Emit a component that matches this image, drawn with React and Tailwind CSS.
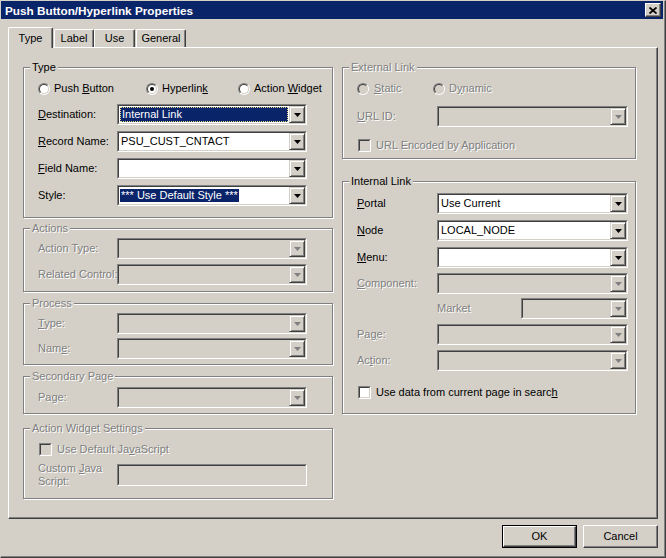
import React from "react";

const DIS = "text-[#808080] [text-shadow:1px_1px_0_#fff]";

const Radio = ({ checked, disabled }) => (
  <span className="flex w-[12px] h-[12px] shrink-0 rounded-full border border-t-[#808080] border-l-[#808080] border-r-white border-b-white">
    <span
      className={`flex flex-1 items-center justify-center rounded-full border border-t-[#404040] border-l-[#404040] border-r-[#d4d0c8] border-b-[#d4d0c8] ${
        disabled ? "bg-[#d4d0c8]" : "bg-white"
      }`}
    >
      {checked && <span className="w-[4px] h-[4px] rounded-full bg-black" />}
    </span>
  </span>
);

const Check = ({ disabled }) => (
  <span className="flex w-[13px] h-[13px] shrink-0 border border-t-[#808080] border-l-[#808080] border-r-white border-b-white">
    <span
      className={`flex-1 border border-t-[#404040] border-l-[#404040] border-r-[#d4d0c8] border-b-[#d4d0c8] ${
        disabled ? "bg-[#d4d0c8]" : "bg-white"
      }`}
    />
  </span>
);

const Arrow = ({ disabled }) => (
  <svg width="7" height="4" viewBox="0 0 7 4">
    <polygon points="0,0 7,0 3.5,4" fill={disabled ? "#808080" : "#000"} />
  </svg>
);

// sunken combo box with drop button
const Combo = ({ w, value, disabled, focus, hl }) => (
  <div
    className={`flex h-[21px] shrink-0 border border-t-[#808080] border-l-[#808080] border-r-white border-b-white ${w}`}
  >
    <div
      className={`flex flex-1 border border-t-[#404040] border-l-[#404040] border-r-[#d4d0c8] border-b-[#d4d0c8] ${
        disabled ? "bg-[#d4d0c8]" : "bg-white"
      }`}
    >
      <div className="flex flex-1 items-center min-w-0 p-[1px]">
        {focus ? (
          <div className="flex items-center w-full h-full bg-[#0a246a] text-white border border-dotted border-[#e6d68c] pl-[1px] whitespace-nowrap">
            {value}
          </div>
        ) : hl ? (
          <span className="bg-[#0a246a] text-white px-[1px] whitespace-nowrap">{value}</span>
        ) : (
          <span className="pl-[1px] whitespace-nowrap">{value}</span>
        )}
      </div>
      <div className="flex w-[16px] items-center justify-center bg-[#d4d0c8] border border-t-[#d4d0c8] border-l-[#d4d0c8] border-r-[#404040] border-b-[#404040] shadow-[inset_1px_1px_0_#fff,inset_-1px_-1px_0_#808080]">
        <Arrow disabled={disabled} />
      </div>
    </div>
  </div>
);

const Group = ({ title, disabled, className, children }) => (
  <div
    className={`flex flex-col shrink-0 border border-[#808080] shadow-[inset_1px_1px_0_#fff,1px_1px_0_#fff] ${className}`}
  >
    <span
      className={`-mt-[7px] ml-[6px] px-[2px] self-start bg-[#d4d0c8] leading-[13px] ${
        disabled ? DIS : "text-black"
      }`}
    >
      {title}
    </span>
    {children}
  </div>
);

const Row = ({ label, disabled, lw, className, children }) => (
  <div className={`flex items-center ${className}`}>
    <span className={`${lw} shrink-0 whitespace-nowrap ${disabled ? DIS : ""}`}>{label}</span>
    {children}
  </div>
);

const Tab = ({ label, active, className }) => (
  <div
    className={`flex items-center justify-center bg-[#d4d0c8] border-l border-t border-r border-l-white border-t-white border-r-[#404040] rounded-t-[2px] shadow-[inset_-1px_0_0_#808080] ${
      active ? "relative z-10 h-[21px] -mb-[1px]" : "h-[18px]"
    } ${className}`}
  >
    {label}
  </div>
);

const Button = ({ label, isDefault }) => (
  <div className={`w-[75px] h-[23px] flex ${isDefault ? "border border-black" : ""}`}>
    <div className="flex flex-1 items-center justify-center bg-[#d4d0c8] border border-t-white border-l-white border-r-[#404040] border-b-[#404040] shadow-[inset_-1px_-1px_0_#808080]">
      {label}
    </div>
  </div>
);

export default function App() {
  return (
    <div className="w-[666px] h-[558px] bg-[#d4d0c8] text-black text-[11px] leading-[13px] font-['Liberation_Sans',Arial,sans-serif] border border-t-[#d4d0c8] border-l-[#d4d0c8] border-r-[#404040] border-b-[#404040] shadow-[inset_-1px_-1px_0_#808080] flex flex-col">
      {/* Title bar */}
      <div className="h-[18px] mr-[2px] bg-[#0a246a] flex items-center justify-between pl-[4px] pr-[2px]">
        <span className="text-white font-bold text-[11.75px]">Push Button/Hyperlink Properties</span>
        <div className="w-[16px] h-[14px] flex items-center justify-center bg-[#d4d0c8] border border-t-white border-l-white border-r-[#404040] border-b-[#404040] shadow-[inset_-1px_-1px_0_#808080]">
          <svg width="8" height="7" viewBox="0 0 8 7">
            <path d="M0.5 0.5 L7.5 6.5 M7.5 0.5 L0.5 6.5" stroke="#000" strokeWidth="1.7" />
          </svg>
        </div>
      </div>

      <div className="flex flex-col pl-[7px] pt-[8px]">
        {/* Tabs */}
        <div className="flex items-end h-[20px]">
          <Tab label="Type" active className="w-[45px]" />
          <Tab label="Label" className="w-[40px] ml-[1px]" />
          <Tab label="Use" className="w-[41px]" />
          <Tab label="General" className="w-[50px] ml-[1px]" />
        </div>

        {/* Tab panel */}
        <div className="w-[650px] h-[472px] flex gap-[9px] pl-[14px] pt-[19px] bg-[#d4d0c8] border border-t-white border-l-white border-r-[#404040] border-b-[#404040] shadow-[inset_-1px_-1px_0_#808080]">
          {/* left column */}
          <div className="flex flex-col w-[310px]">
            <Group title="Type" className="h-[151px]">
              <div className="flex items-center h-[13px] mt-[8px] ml-[14px]">
                <div className="flex items-center w-[108px]">
                  <Radio />
                  <span className="ml-[4px]">
                    Push <u>B</u>utton
                  </span>
                </div>
                <div className="flex items-center w-[92px]">
                  <Radio checked />
                  <span className="ml-[4px]">
                    Hyperlin<u>k</u>
                  </span>
                </div>
                <div className="flex items-center">
                  <Radio />
                  <span className="ml-[4px]">
                    Action <u>W</u>idget
                  </span>
                </div>
              </div>
              <Row lw="w-[79px]" className="ml-[14px] mt-[9px]" label={<><u>D</u>estination:</>}>
                <Combo w="w-[190px]" value="Internal Link" focus />
              </Row>
              <Row lw="w-[79px]" className="ml-[14px] mt-[6px]" label={<><u>R</u>ecord Name:</>}>
                <Combo w="w-[190px]" value="PSU_CUST_CNTACT" />
              </Row>
              <Row lw="w-[79px]" className="ml-[14px] mt-[6px]" label={<><u>F</u>ield Name:</>}>
                <Combo w="w-[190px]" value="" />
              </Row>
              <Row lw="w-[79px]" className="ml-[14px] mt-[6px]" label="Style:">
                <Combo w="w-[190px]" value="*** Use Default Style ***" hl />
              </Row>
            </Group>

            <Group title="Actions" disabled className="h-[64px] mt-[10px]">
              <Row lw="w-[79px]" disabled className="ml-[14px] mt-[3px]" label="Action Type:">
                <Combo w="w-[190px]" disabled />
              </Row>
              <Row lw="w-[79px]" disabled className="ml-[14px] mt-[5px]" label="Related Control:">
                <Combo w="w-[190px]" disabled />
              </Row>
            </Group>

            <Group title="Process" disabled className="h-[62px] mt-[11px]">
              <Row lw="w-[79px]" disabled className="ml-[14px] mt-[3px]" label={<><u>T</u>ype:</>}>
                <Combo w="w-[190px]" disabled />
              </Row>
              <Row lw="w-[79px]" disabled className="ml-[14px] mt-[4px]" label={<>Nam<u>e</u>:</>}>
                <Combo w="w-[190px]" disabled />
              </Row>
            </Group>

            <Group title="Secondary Page" disabled className="h-[38px] mt-[11px]">
              <Row lw="w-[79px]" disabled className="ml-[14px] mt-[4px]" label="Page:">
                <Combo w="w-[190px]" disabled />
              </Row>
            </Group>

            <Group title="Action Widget Settings" disabled className="h-[71px] mt-[14px]">
              <div className="flex items-center h-[13px] mt-[8px] ml-[15px]">
                <Check disabled />
                <span className={`ml-[5px] ${DIS}`}>
                  Use Default Ja<u>v</u>aScript
                </span>
              </div>
              <div className="flex items-center ml-[14px] mt-[6px]">
                <span className={`w-[79px] shrink-0 ${DIS}`}>
                  Custom <u>J</u>ava
                  <br />
                  Script:
                </span>
                <div className="flex w-[190px] h-[22px] border border-t-[#808080] border-l-[#808080] border-r-white border-b-white">
                  <div className="flex-1 bg-[#d4d0c8] border border-t-[#404040] border-l-[#404040] border-r-[#d4d0c8] border-b-[#d4d0c8]" />
                </div>
              </div>
            </Group>
          </div>

          {/* right column */}
          <div className="flex flex-col w-[294px]">
            <Group title="External Link" disabled className="h-[92px]">
              <div className="flex items-center h-[13px] mt-[8px] ml-[14px]">
                <div className="flex items-center w-[76px]">
                  <Radio disabled />
                  <span className={`ml-[5px] ${DIS}`}>
                    <u>S</u>tatic
                  </span>
                </div>
                <div className="flex items-center">
                  <Radio disabled />
                  <span className={`ml-[4px] ${DIS}`}>
                    D<u>y</u>namic
                  </span>
                </div>
              </div>
              <Row lw="w-[80px]" disabled className="ml-[14px] mt-[11px]" label={<><u>U</u>RL ID:</>}>
                <Combo w="w-[191px]" disabled />
              </Row>
              <div className="flex items-center h-[13px] mt-[12px] ml-[15px]">
                <Check disabled />
                <span className={`ml-[5px] ${DIS}`}>URL Encoded by Application</span>
              </div>
            </Group>

            <Group title="Internal Link" className="h-[233px] mt-[22px]">
              <Row lw="w-[80px]" className="ml-[14px] mt-[5px]" label={<><u>P</u>ortal</>}>
                <Combo w="w-[191px]" value="Use Current" />
              </Row>
              <Row lw="w-[80px]" className="ml-[14px] mt-[6px]" label={<><u>N</u>ode</>}>
                <Combo w="w-[191px]" value="LOCAL_NODE" />
              </Row>
              <Row lw="w-[80px]" className="ml-[14px] mt-[6px]" label={<><u>M</u>enu:</>}>
                <Combo w="w-[191px]" value="" />
              </Row>
              <Row lw="w-[80px]" disabled className="ml-[14px] mt-[5px]" label={<><u>C</u>omponent:</>}>
                <Combo w="w-[191px]" disabled />
              </Row>
              <Row lw="w-[84px]" disabled className="ml-[94px] mt-[4px]" label="Market">
                <Combo w="w-[107px]" disabled />
              </Row>
              <Row lw="w-[80px]" disabled className="ml-[14px] mt-[5px]" label={<>Pa<u>g</u>e:</>}>
                <Combo w="w-[191px]" disabled />
              </Row>
              <Row lw="w-[80px]" disabled className="ml-[14px] mt-[5px]" label={<>Ac<u>t</u>ion:</>}>
                <Combo w="w-[191px]" disabled />
              </Row>
              <div className="flex items-center h-[13px] mt-[15px] ml-[15px]">
                <Check />
                <span className="ml-[5px]">
                  Use data from current page in searc<u>h</u>
                </span>
              </div>
            </Group>
          </div>
        </div>

        {/* Buttons */}
        <div className="w-[650px] flex justify-end gap-[6px] mt-[6px]">
          <Button label="OK" isDefault />
          <Button label="Cancel" />
        </div>
      </div>
    </div>
  );
}
